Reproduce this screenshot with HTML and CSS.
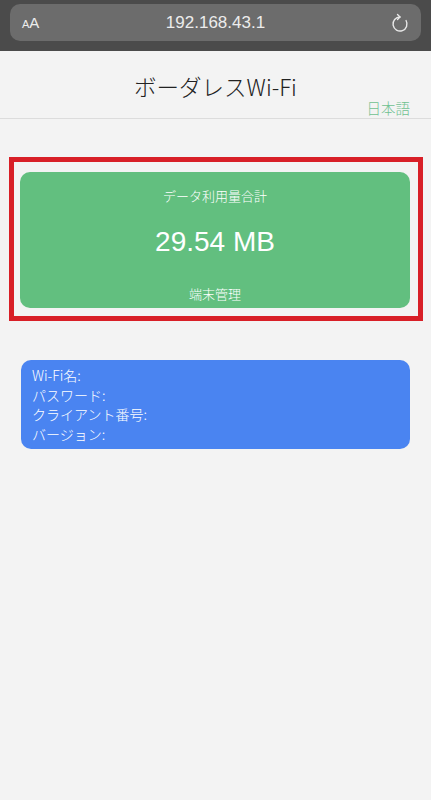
FILE: index.html
```html
<!DOCTYPE html>
<html lang="ja">
<head>
    <meta charset="UTF-8">
    <meta name="viewport" content="width=device-width, initial-scale=1.0">
    <title>ボーダレスWi-Fi</title>
    <link rel="stylesheet" href="styles.css">
</head>
<body>
    <!-- browser address bar -->
    <div class="browser-bar">
        <div class="url-pill">
            <span class="text-size"><small>A</small>A</span>
            <span class="url">192.168.43.1</span>
            <svg class="reload" width="18" height="20" viewBox="0 0 18 20">
                <path d="M9 4 A7 7 0 1 0 15.06 7.5" fill="none" stroke="#e8e8e8" stroke-width="1.4" stroke-linecap="round"/>
                <path d="M6.5 1.5 L9 4 L6.5 6.5" fill="none" stroke="#e8e8e8" stroke-width="1.4" stroke-linecap="round" stroke-linejoin="round"/>
            </svg>
        </div>
    </div>

    <div class="header">
        <h1>ボーダレスWi-Fi</h1>
        <div class="lang"><a href="#">日本語</a></div>
    </div>

    <div class="content">
        <div class="highlight">
            <div class="usage-card">
                <p class="usage-label">データ利用量合計</p>
                <p class="usage-value">29.54 MB</p>
                <p class="usage-link">端末管理</p>
            </div>
        </div>

        <div class="info-card">
            <p>Wi-Fi名:</p>
            <p>パスワード:</p>
            <p>クライアント番号:</p>
            <p>バージョン:</p>
        </div>
    </div>
</body>
</html>
```

FILE: styles.css
```css
body {
    font-family: "Noto Sans CJK JP", "Noto Sans", sans-serif;
    background: #f3f3f3;
    margin: 0;
    padding: 0;
    color: #222;
}
p {
    margin: 0;
}

/* Browser chrome */
.browser-bar {
    background: #4b4b4b;
    height: 51px;
    padding: 4px 10px 0;
    box-sizing: border-box;
}
.url-pill {
    height: 37px;
    background: #6c6c6c;
    border-radius: 10px;
    display: flex;
    align-items: center;
    padding: 0 12px 0 12px;
    color: #ececec;
}
.text-size {
    font-family: "Liberation Sans", sans-serif;
    font-size: 15px;
    width: 40px;
}
.text-size small {
    font-size: 11px;
}
.url {
    flex: 1;
    text-align: center;
    font-family: "Liberation Sans", sans-serif;
    font-size: 17px;
    margin-right: 22px;
}
.reload {
    display: block;
}

/* Header */
.header {
    padding: 22px 21px 1px;
    border-bottom: 1px solid #dcdcdc;
}
h1 {
    margin: 0;
    text-align: center;
    font-size: 22.5px;
    font-weight: 300;
    line-height: 26px;
    color: #222;
}
.lang {
    text-align: right;
    font-size: 14.5px;
    line-height: 18px;
    font-weight: 300;
}
.lang a {
    color: #6fc190;
    text-decoration: none;
}

/* Content */
.content {
    padding: 0 0 40px;
}
.highlight {
    margin: 38px 8px 0 9px;
    border: 5px solid #d81f27;
    padding: 10px 8px 8px 6px;
}
.usage-card {
    background: #62bf7f;
    border-radius: 10px;
    color: #fff;
    text-align: center;
    padding: 14px 0 4px;
    font-weight: 300;
}
.usage-label {
    font-size: 13px;
    line-height: 20px;
}
.usage-value {
    font-family: "Liberation Sans", sans-serif;
    font-size: 28px;
    line-height: 34px;
    margin-top: 19px;
    font-weight: 400;
}
.usage-link {
    font-size: 13px;
    line-height: 20px;
    margin-top: 25px;
}

.info-card {
    margin: 39px 21px 0;
    background: #4a84f1;
    border-radius: 10px;
    color: #fff;
    padding: 6px 11px 5px;
    font-size: 14px;
    line-height: 19.5px;
    font-weight: 300;
}
```
